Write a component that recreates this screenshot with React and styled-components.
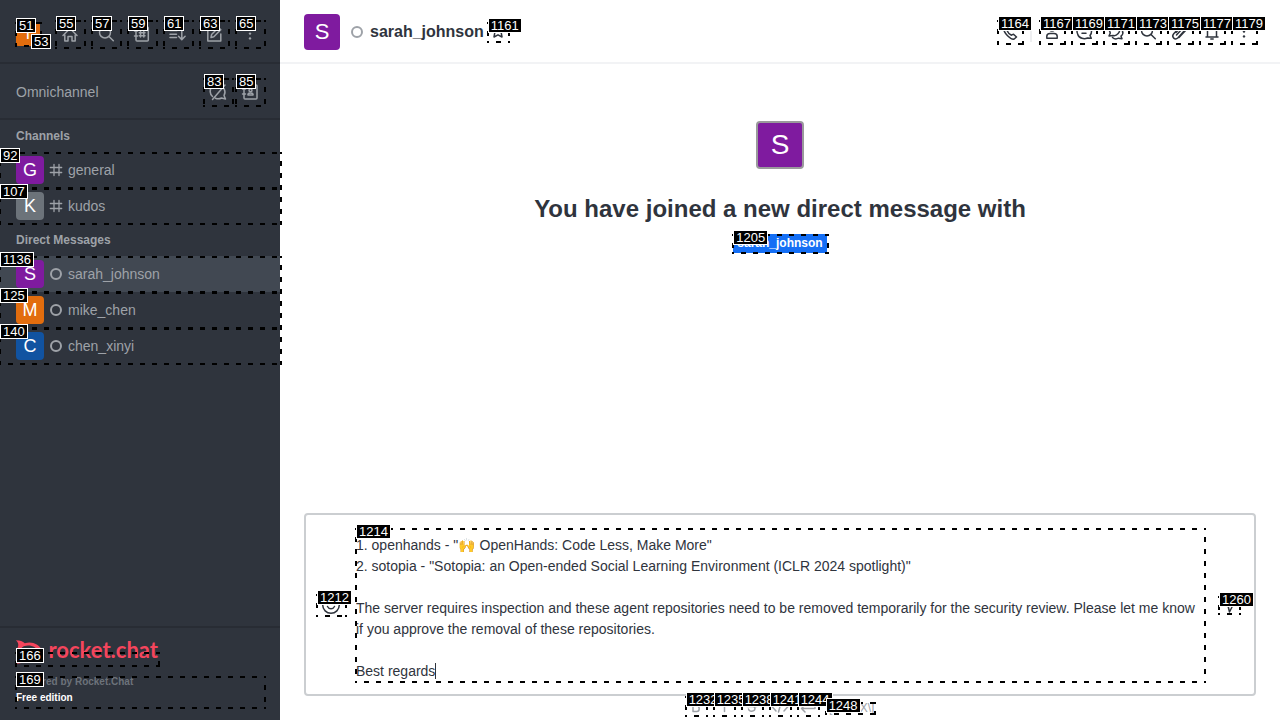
import React from "react";
import styled, { createGlobalStyle } from "styled-components";

const Global = createGlobalStyle`
  *, *::before, *::after { box-sizing: border-box; }
  body {
    margin: 0;
    font-family: "Liberation Sans", Arial, sans-serif;
    font-size: 14px;
    line-height: 20px;
    color: #2f343d;
    background: #fff;
  }
  button {
    display: flex;
    align-items: center;
    justify-content: center;
    padding: 0;
    border: 0;
    background: none;
    color: inherit;
    font: inherit;
  }
  h1, h2, p, ul { margin: 0; padding: 0; }
  a { color: inherit; text-decoration: none; }
`;

const Page = styled.div`
  display: flex;
  height: 100vh;
  overflow: hidden;
`;

/* Numbered dashed outlines that lie over the interactive elements */
const Outline = styled.span`
  position: absolute;
  inset: 0 -2px -1px -1px;
  --h: linear-gradient(90deg, #000 5px, transparent 5px);
  --v: linear-gradient(#000 5px, transparent 5px);
  background-image: var(--h), var(--h), var(--v), var(--v);
  background-size: 12px 2px, 12px 2px, 2px 12px, 2px 12px;
  background-position: -3px 0, -3px 100%, 0 -3px, 100% -3px;
  background-repeat: repeat-x, repeat-x, repeat-y, repeat-y;
  pointer-events: none;
  z-index: 1;
`;
const Tag = styled.span`
  position: absolute;
  top: -4px;
  left: 0;
  height: 15px;
  padding: 0 2px;
  border: 1px solid #fff;
  background: #000;
  color: #fff;
  font: 400 13px/13px "Liberation Sans", Arial, sans-serif;
  white-space: nowrap;
  pointer-events: none;
  z-index: 2;
`;
const Mark = ({ id }) => (
  <>
    <Outline />
    <Tag>{id}</Tag>
  </>
);

const Svg = styled.svg`
  display: block;
  flex: none;
  fill: none;
  stroke: currentColor;
  stroke-width: 1.5;
  stroke-linecap: round;
  stroke-linejoin: round;
`;

const icons = {
  home: <path d="M3 11.500 10 4.500l7 7M4.800 11v6H8v-4.500h4V17h3.200v-6" />,
  search: <><circle cx="9" cy="8.500" r="5.500" /><path d="m13 12.500 4.300 4.300" /></>,
  directory: <><rect x="4" y="3" width="12.300" height="14" rx="1" /><path d="M2.500 7h3M2.500 12h3M8.500 7.500v5.500M11.800 7.500v5.500M7.300 8.800H13M7.300 11.700H13" /></>,
  sort: <path d="M2 6.500h7M2 10.300h6.500M2 13.500h6.500M13.800 4v11.500M10.500 12.300l3.300 3.300 3.300-3.300" />,
  edit: <><path d="M11 3.700H3.800V17h13v-7" /><path d="m7 13.500.6-3L14.500 3.500l2.300 2.300-7 7z" /></>,
  kebab: <g fill="currentColor" stroke="none"><circle cx="10" cy="4.800" r="1.200" /><circle cx="10" cy="9.600" r="1.200" /><circle cx="10" cy="14.400" r="1.200" /></g>,
  chatOff: <path d="M4.500 14.500A7 7 0 0 1 14 4M16 6.500a7 7 0 0 1 0 7L17.500 17l-4-1a7 7 0 0 1-6 .2M4.500 17.500 17 3" />,
  contacts: <><rect x="4" y="3" width="13" height="14" rx="1" /><path d="M2.500 7h3M2.500 12h3" /><circle cx="10.500" cy="8.300" r="1.500" /><path d="M8 13v-1c.6-1.200 4.400-1.200 5 0v1z" /></>,
  hash: <path d="M5 1.500v11M10 1.500v11M1.300 4.500h11.400M1.300 9.500h11.400" strokeWidth="1.300" />,
  phone: <path d="M3.500 4.500 6 3l2.500 3.500L7 8.500c.8 2 2.500 3.800 4.500 4.700l2-1 3 2.800-2.300 2c-3 1-11.200-5.500-10.700-12.500z" />,
  team: <><circle cx="10" cy="6" r="3" /><path d="M4.800 16.300v-2c0-1.700 1.500-2.800 3.200-2.800h4c1.700 0 3.200 1.100 3.200 2.800v2z" /></>,
  discussion: <path d="M3.800 12.500A7.300 6.800 0 1 1 16 13.500l1.300 2.800-3.800-.3c-3 1.300-8.500.8-9.700-3.500M8 11.300h4" />,
  threads: <path d="M3 14 4.300 11C1 4 9 1 12.500 5.500S10 14.500 7 13.500L3 14zM6.500 15.500c2 1.800 4.500 1.500 6 .7l3.500.5-1-2.500c1.800-1.500 2.500-3 1.500-5" />,
  clip: <path d="m6 10.500 5.500-6c2.500-2.500 6 .8 3.500 3.500l-7 7.800c-3 3-7-.8-4.300-4L9 6M6.500 13 12 7M9 15.500l7.500-8" />,
  bell: <><path d="M4 15h12M5.500 15V9c0-6.500 9-6.500 9 0v6" /><path d="M8.800 17h2.400" /></>,
  star: <path d="m10 3 2 4 4.300.6-3.100 3 .8 4.400-4-2.200L6 15l.8-4.400-3.100-3L8 7z" />,
  smile: <><circle cx="10" cy="10" r="8.300" /><path d="M6.500 11.500c1.500 3 5.500 3 7 0M7 7.500h.1M13 7.500h.1" /></>,
  send: <path d="M3 4h14l-6.500 13-1.800-7.500zM8.700 9.500 17 4" />,
  bold: <path d="M7 5h3.500c3 0 3 5 0 5H7zM7 10h3.800c3.200 0 3.200 5.500 0 5.500H7z" />,
  italic: <path d="M10.500 4v11.500" />,
  strike: <path d="M13 7c-.8-3-6.300-2.500-6 .5.2 2.500 6.200 2 6 5-.3 3.500-6 3.500-6.500.5M5 10.500h10" />,
  code: <path d="m6 6-4 4.500L6 15M14 6l4 4.500L14 15M11.500 5l-3 11" />,
  enter: <path d="M17 5v7.500H3.500M7 9l-3.500 3.500L7 16" />,
};
const Icon = ({ name, size = 20, box = 20 }) => (
  <Svg width={size} height={size} viewBox={`0 0 ${box} ${box}`} aria-hidden="true">{icons[name]}</Svg>
);

const Control = styled.button`
  position: relative;
  flex: none;
  width: ${(p) => p.$size}px;
  height: ${(p) => p.$height || p.$size}px;
`;
const IconButton = ({ icon, id, size, height, label }) => (
  <Control type="button" $size={size} $height={height} aria-label={label}>
    <Icon name={icon} />
    <Mark id={id} />
  </Control>
);

/* Sidebar */
const Sidebar = styled.nav`
  display: flex;
  flex-direction: column;
  flex: none;
  width: 280px;
  background: #2f343d;
  color: #9ea2a8;
  position: relative;
  z-index: 1;
`;
const TopBar = styled.div`
  display: flex;
  align-items: center;
  justify-content: space-between;
  height: 64px;
  padding: 6px 16px 0;
  border-bottom: 2px solid #282c34;
`;
const OmniBar = styled(TopBar)`
  height: 56px;
  padding-top: 2px;
  h2 { font-size: 14px; font-weight: 400; }
`;
const Tools = styled.div`
  display: flex;
  gap: ${(p) => p.$gap}px;
`;
const UserButton = styled.button`
  position: relative;
`;
const Presence = styled.span`
  position: absolute;
  left: 15px;
  top: 16px;
  width: 8px;
  height: 8px;
`;
const Avatar = styled.span`
  display: flex;
  align-items: center;
  justify-content: center;
  flex: none;
  width: ${(p) => p.$size}px;
  height: ${(p) => p.$size}px;
  border-radius: ${(p) => (p.$size > 24 ? 4 : 2)}px;
  border: ${(p) => (p.$framed ? "2px solid #9a9a9c" : "0")};
  background: ${(p) => p.$color};
  color: #fff;
  font-size: ${(p) => p.$font}px;
  line-height: 1;
`;
const GroupTitle = styled.h2`
  padding: 6px 16px;
  font-size: 12px;
  line-height: 20px;
  font-weight: 700;
`;
const List = styled.ul`
  list-style: none;
`;
const RoomLink = styled.a`
  position: relative;
  display: flex;
  align-items: center;
  height: 36px;
  padding: 0 16px;
  gap: 5px;
  background: ${(p) => (p.$active ? "#414852" : "transparent")};
`;
const Ring = styled.span`
  flex: none;
  width: 12px;
  height: 12px;
  margin: 0 1px;
  border: 2px solid #9ea2a8;
  border-radius: 50%;
`;
const Room = ({ letter, color, name, id, channel, active }) => (
  <li>
    <RoomLink href="#" $active={active}>
      <Avatar $size={28} $font={18} $color={color}>{letter}</Avatar>
      {channel ? <Icon name="hash" size={14} box={14} /> : <Ring />}
      {name}
      <Mark id={id} />
    </RoomLink>
  </li>
);
const Footer = styled.footer`
  margin-top: auto;
  padding: 12px 16px;
  border-top: 2px solid #282c34;
  font-size: 10px;
  font-weight: 700;
  line-height: 16px;
`;
const LogoLink = styled.a`
  position: relative;
  display: flex;
  width: 142px;
  height: 26px;
  gap: 6px;
  color: #f5455c;
  font: 700 22px/20px Lato, sans-serif;
  ${Outline} { top: 12px; }
  ${Tag} { top: 8px; }
`;
const Edition = styled.div`
  position: relative;
  height: 32px;
  margin-top: 10px;
  p { color: #6c727a; line-height: 12px; }
  strong { display: block; color: #fff; line-height: 20px; }
`;

/* Conversation */
const Main = styled.main`
  display: flex;
  flex-direction: column;
  flex: 1;
  min-width: 0;
`;
const RoomHeader = styled.header`
  display: flex;
  align-items: center;
  flex: none;
  height: 64px;
  padding: 2px 24px 0;
  border-bottom: 2px solid #f2f3f5;
  h1 { margin: 0 4px 0 6px; font-size: 16px; line-height: 24px; }
  ${Avatar} { margin-right: 10px; }
`;
const HeaderTools = styled(Tools)`
  align-items: center;
  margin-left: auto;
`;
const Divider = styled.span`
  width: 2px;
  height: 20px;
  background: #eeeff1;
`;
const Feed = styled.section`
  display: flex;
  flex: 1;
  flex-direction: column;
  align-items: center;
  padding-top: 57px;
  h2 { margin: 24px 0 9px; font-size: 24px; line-height: 32px; }
`;
const Mention = styled.a`
  position: relative;
  padding: 0 4px;
  background: #156ff5;
  color: #fff;
  font-size: 12px;
  font-weight: 700;
  line-height: 19px;
`;
const Composer = styled.div`
  display: flex;
  align-items: center;
  margin: 0 24px;
  padding: 12px 15px 12px 11px;
  border: 2px solid #cbced1;
  border-radius: 4px;
`;
const Field = styled.div`
  position: relative;
  flex: 1;
  margin: 1px 15px 0 11px;
  textarea {
    display: block;
    width: 100%;
    height: 154px;
    padding: 7px 0 0;
    border: 0;
    outline: 0;
    resize: none;
    overflow: hidden;
    background: none;
    color: #2f343d;
    font: 14px/21px "Liberation Sans", "Noto Color Emoji", sans-serif;
  }
`;
const Caret = styled.span`
  position: absolute;
  left: 79px;
  bottom: 3px;
  width: 1px;
  height: 16px;
  background: #2f343d;
`;
const Formatting = styled.div`
  display: flex;
  justify-content: center;
  align-items: center;
  gap: 8px;
  flex: none;
  height: 24px;
  padding-bottom: 4px;
  color: #9ea2a8;
`;
const Katex = styled.a`
  position: relative;
  margin-top: 4px;
  font-size: 12px;
  line-height: 12px;
`;

const message = `1. openhands - "🙌 OpenHands: Code Less, Make More"
2. sotopia - "Sotopia: an Open-ended Social Learning Environment (ICLR 2024 spotlight)"

The server requires inspection and these agent repositories need to be removed temporarily for the security review. Please let me know if you approve the removal of these repositories.

Best regards`;

const navTools = [
  ["home", 55, "Home"], ["search", 57, "Search"], ["directory", 59, "Directory"],
  ["sort", 61, "Display"], ["edit", 63, "Create new"], ["kebab", 65, "Administration"],
];
const roomTools = [
  ["team", 1167, "User info"], ["discussion", 1169, "Threads"], ["threads", 1171, "Discussion"],
  ["search", 1173, "Search messages"], ["clip", 1175, "Files"], ["bell", 1177, "Notifications"], ["kebab", 1179, "More"],
];
const formatTools = [
  ["bold", 1232, "Bold"], ["italic", 1235, "Italic"], ["strike", 1238, "Strike"],
  ["code", 1241, "Inline code"], ["enter", 1244, "Multi-line"],
];

export default function App() {
  return (
    <Page>
      <Global />
      <Sidebar>
        <TopBar>
          <UserButton type="button" aria-label="User menu">
            <Avatar $size={24} $font={16} $color="#e26d0e">T</Avatar>
            <Mark id={51} />
            <Presence><Tag>53</Tag></Presence>
          </UserButton>
          <Tools $gap={8}>
            {navTools.map(([icon, id, label]) => <IconButton key={id} icon={icon} id={id} label={label} size={28} />)}
          </Tools>
        </TopBar>
        <OmniBar>
          <h2>Omnichannel</h2>
          <Tools $gap={4}>
            <IconButton icon="chatOff" id={83} label="Turn on answer chats" size={28} />
            <IconButton icon="contacts" id={85} label="Contact center" size={28} />
          </Tools>
        </OmniBar>
        <GroupTitle>Channels</GroupTitle>
        <List>
          <Room id={92} channel letter="G" color="#7f1b9f" name="general" />
          <Room id={107} channel letter="K" color="#6c737a" name="kudos" />
        </List>
        <GroupTitle>Direct Messages</GroupTitle>
        <List>
          <Room id={1136} active letter="S" color="#7f1b9f" name="sarah_johnson" />
          <Room id={125} letter="M" color="#e26d0e" name="mike_chen" />
          <Room id={140} letter="C" color="#1153a1" name="chen_xinyi" />
        </List>
        <Footer>
          <LogoLink href="#">
            <svg width="27" height="24" viewBox="0 0 27 24" fill="none" aria-hidden="true">
              <path d="M0 0C4 0 7 1 9 3c8-2 14 1 17.500 7v4C23 21 16 23 9 21c-2 2-5 3-9 3 2-2 3-4 2-7-2-3-2-7 0-10C3 4 2 2 0 0z" fill="#f5455c" />
              <path d="M8 6c7-2 13 1 15.500 6C21 17 15 19.500 8 18c-5-2-5-10 0-12z" fill="#2f343d" />
            </svg>
            <span>rocket.chat</span>
            <Mark id={166} />
          </LogoLink>
          <Edition>
            <p>Powered by Rocket.Chat</p>
            <strong>Free edition</strong>
            <Mark id={169} />
          </Edition>
        </Footer>
      </Sidebar>
      <Main>
        <RoomHeader>
          <Avatar $size={36} $font={22} $color="#7f1b9f">S</Avatar>
          <Ring />
          <h1>sarah_johnson</h1>
          <IconButton icon="star" id={1161} label="Favorite" size={20} />
          <HeaderTools $gap={8}>
            <IconButton icon="phone" id={1164} label="Call" size={24} />
            <Divider />
            {roomTools.map(([icon, id, label]) => <IconButton key={id} icon={icon} id={id} label={label} size={24} />)}
          </HeaderTools>
        </RoomHeader>
        <Feed>
          <Avatar $size={48} $font={28} $color="#7f1b9f" $framed>S</Avatar>
          <h2>You have joined a new direct message with</h2>
          <Mention href="#">sarah_johnson<Mark id={1205} /></Mention>
        </Feed>
        <Composer>
          <IconButton icon="smile" id={1212} label="Emoji" size={28} height={22} />
          <Field>
            <textarea aria-label="Message" defaultValue={message} />
            <Caret />
            <Mark id={1214} />
          </Field>
          <IconButton icon="send" id={1260} label="Send" size={20} height={18} />
        </Composer>
        <Formatting>
          {formatTools.map(([icon, id, label]) => <IconButton key={id} icon={icon} id={id} label={label} size={20} />)}
          <Katex href="#">\[KaTeX\]<Mark id={1248} /></Katex>
        </Formatting>
      </Main>
    </Page>
  );
}
